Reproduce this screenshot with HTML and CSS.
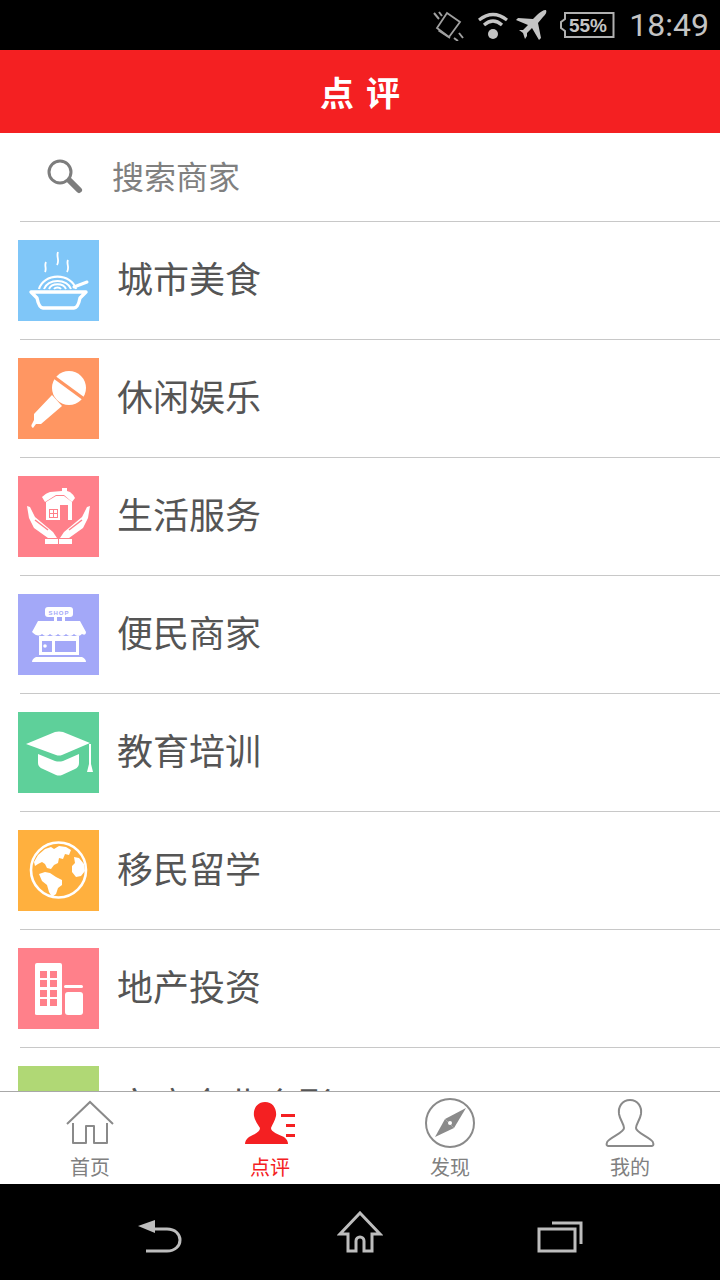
FILE: index.html
```html
<!DOCTYPE html>
<html lang="zh">
<head>
    <meta charset="UTF-8">
    <meta name="viewport" content="width=device-width, initial-scale=1.0">
    <title>点评</title>
    <link rel="stylesheet" href="styles.css">
</head>
<body>
    <div class="screen">
        <div class="status-bar">
            <!-- vibrate -->
            <svg class="st-vibrate" width="32" height="32" viewBox="0 0 32 32" fill="none" stroke="#a0a0a0" stroke-width="1.8">
                <path d="M14 4 L27 13 L16 28 L4 19 Z"/>
                <path d="M5.500 21.500 L17 29" stroke-width="1.500"/>
                <path d="M1 4 L6 10 M6 3 L9 7 M21 29 L25 32 M26 24 L30 29" stroke-width="2"/>
            </svg>
            <!-- wifi -->
            <svg class="st-wifi" width="32" height="30" viewBox="0 0 32 30" fill="none" stroke="#c4c4c4" stroke-width="3.200">
                <path d="M2 10 Q16 -1 30 10"/>
                <path d="M7 15 Q16 7 25 15"/>
                <circle cx="16" cy="24" r="5" fill="#c4c4c4" stroke="none"/>
            </svg>
            <!-- plane -->
            <svg class="st-plane" width="32" height="32" viewBox="0 0 32 32" fill="#c4c4c4">
                <path d="M30 1 C27 1 24 3 21 6 L17 10 L2 9 L0 11 L12 16 L7 21 L3 21 L7 24 L9 30 L11 27 L11 24 L16 19 L23 31 L25 29 L22 14 L27 8 C30 5 31 3 30 1 Z"/>
            </svg>
            <!-- battery -->
            <svg class="st-battery" width="56" height="28" viewBox="0 0 56 28">
                <path d="M6 2 H54.500 V26 H6 V20 L2 17 V11 L6 8 Z" fill="none" stroke="#b0b0b0" stroke-width="2"/>
                <text class="st-battery-text" x="29" y="21" text-anchor="middle">55%</text>
            </svg>
            <span class="st-time">18:49</span>
        </div>

        <div class="title-bar">点评</div>

        <div class="search-row">
            <svg class="search-icon" width="38" height="38" viewBox="0 0 38 38" fill="none">
                <circle cx="14" cy="14" r="11" stroke="#7d7d7d" stroke-width="3"/>
                <path d="M24 23 L33 32" stroke="#7d7d7d" stroke-width="6" stroke-linecap="round"/>
            </svg>
            <span class="search-text">搜索商家</span>
        </div>

        <div class="cat-list">
            <div class="cat-row">
                <div class="cat-icon bg-blue">
                    <svg width="81" height="81" viewBox="0 0 81 81" fill="none" stroke="#fff">
                        <path d="M28 22 C26 26 29 28 27 32 M40 12 C38 17 42 20 39 25 M50 20 C48 24 52 27 49 32" stroke-width="1.800"/>
                        <path d="M21 49 A19 16 0 0 1 58 49" stroke-width="2.200"/>
                        <path d="M26 49 A14 11 0 0 1 53 49" stroke-width="2"/>
                        <path d="M31 49 A9 7 0 0 1 48 49" stroke-width="2"/>
                        <path d="M36 49 A4 3 0 0 1 43 49" stroke-width="2"/>
                        <path d="M56 47 L69 42" stroke-width="3" stroke-linecap="round"/>
                        <path d="M13 52 H68 L62 58 Q60 68 56 68 H25 Q21 68 19 58 Z" stroke-width="3.400" stroke-linejoin="round"/>
                    </svg>
                </div>
                <span class="cat-name">城市美食</span>
            </div>
            <div class="cat-row">
                <div class="cat-icon bg-orange">
                    <svg width="81" height="81" viewBox="0 0 81 81" fill="#fff">
                        <circle cx="51" cy="30" r="17"/>
                        <path d="M36 19 L66 41" stroke="#ff9662" stroke-width="3.400"/>
                        <path d="M34 37 L44 48 L23 66 L18 66 L15 70 A2.500 2.500 0 0 1 14 66 L16 62 L16 56 Z"/>
                    </svg>
                </div>
                <span class="cat-name">休闲娱乐</span>
            </div>
            <div class="cat-row">
                <div class="cat-icon bg-rose">
                    <svg width="81" height="81" viewBox="0 0 81 81" fill="#fff">
                        <path d="M24 21 Q28 17 32 16 L44 15 V12 H49 V15 L52 16 Q56 19 57 22 L54 26 L46 19 H38 L27 26 Z"/>
                        <path d="M28 26 L38 20 H46 L54 26 V44 H28 Z"/>
                        <path d="M42 29 H50 V44 H42 Z" fill="#ff808a"/>
                        <path d="M31 33 H40 V42 H31 Z" fill="#ff808a"/>
                        <path d="M32 34 H35 V37 H32 Z M36 34 H39 V37 H36 Z M32 38 H35 V41 H32 Z M36 38 H39 V41 H36 Z"/>
                        <path d="M9 30 L12 31 L17 41 L35 56 L39 62 H30 L16 52 L11 42 Z"/>
                        <path d="M72 30 L69 31 L64 41 L46 56 L42 62 H51 L65 52 L70 42 Z"/>
                        <path d="M17 44 L30 54" stroke="#ff808a" stroke-width="1.500"/>
                        <path d="M64 44 L51 54" stroke="#ff808a" stroke-width="1.500"/>
                        <path d="M27 63 H40 V68 H27 Z M41 63 H54 V68 H41 Z"/>
                    </svg>
                </div>
                <span class="cat-name">生活服务</span>
            </div>
            <div class="cat-row">
                <div class="cat-icon bg-violet">
                    <svg width="81" height="81" viewBox="0 0 81 81" fill="#fff">
                        <rect x="27" y="13" width="28" height="10" rx="3"/>
                        <text class="shop-word" x="41" y="20.500" text-anchor="middle">SHOP</text>
                        <path d="M36 23 H39 V27 H36 Z M44 23 H47 V27 H44 Z"/>
                        <path d="M20 27 H62 L68 38 Q68 42 64 40 Q60 44 56 40 Q52 44 48 40 Q44 44 40 40 Q36 44 32 40 Q28 44 24 40 Q20 44 14 38 Z"/>
                        <path d="M21 42 H61 V61 H21 Z M24 47 V58 H34 V47 Z M37 47 V58 H58 V47 Z" fill-rule="evenodd"/>
                        <circle cx="27" cy="52" r="1.800"/>
                        <path d="M18 63 H64 Q68 65 68 68 H14 Q14 65 18 63 Z"/>
                    </svg>
                </div>
                <span class="cat-name">便民商家</span>
            </div>
            <div class="cat-row">
                <div class="cat-icon bg-green">
                    <svg width="81" height="81" viewBox="0 0 81 81" fill="#fff">
                        <path d="M8 32 L37 20 Q41 19 45 20 L72 31 L44 43 Q41 44 38 43 Z"/>
                        <path d="M20 42 L37 49 Q41 50 45 49 L61 42 V51 Q61 55 57 57 L44 63 Q41 64 38 63 L25 57 Q20 55 20 51 Z"/>
                        <path d="M71 32 H73 V52 L75 60 H69 L71 52 Z"/>
                    </svg>
                </div>
                <span class="cat-name">教育培训</span>
            </div>
            <div class="cat-row">
                <div class="cat-icon bg-amber">
                    <svg width="81" height="81" viewBox="0 0 81 81">
                        <circle cx="40.500" cy="40" r="27.500" fill="none" stroke="#fff" stroke-width="2.600"/>
                        <path fill="#fff" d="M16 32 L20 25 L27 19 L33 17 L36 19 L41 16 L48 17 L53 20 L51 25 L47 24 L45 29 L41 28 L40 33 L36 35 L33 39 L29 38 L27 34 L24 32 L20 34 L17 36 Z"/>
                        <path fill="#fff" d="M21 44 L27 42 L32 43 L38 47 L44 50 L44 55 L40 58 L38 64 L34 67 L31 62 L29 55 L24 51 Z"/>
                        <path fill="#fff" d="M56 27 L61 28 L66 34 L67 41 L63 46 L58 47 L54 42 L54 36 L57 33 Z"/>
                    </svg>
                </div>
                <span class="cat-name">移民留学</span>
            </div>
            <div class="cat-row">
                <div class="cat-icon bg-pink">
                    <svg width="81" height="81" viewBox="0 0 81 81" fill="#fff">
                        <path fill-rule="evenodd" d="M19 15 H42 Q44 15 44 17 V66 Q44 67 42 67 H19 Q17 67 17 66 V17 Q17 15 19 15 Z M22 23 V30 H29 V23 Z M32 23 V30 H39 V23 Z M22 32 V39 H29 V32 Z M32 32 V39 H39 V32 Z M22 42 V49 H29 V42 Z M32 42 V49 H39 V42 Z M22 51 V58 H29 V51 Z M32 51 V58 H39 V51 Z"/>
                        <rect x="46" y="37" width="19" height="3" rx="1.500"/>
                        <rect x="47" y="44" width="18" height="23" rx="3"/>
                    </svg>
                </div>
                <span class="cat-name">地产投资</span>
            </div>
            <div class="cat-row">
                <div class="cat-icon bg-lime">
                    <svg width="81" height="81" viewBox="0 0 81 81" fill="#fff">
                        <circle cx="40" cy="33" r="8"/>
                        <circle cx="26" cy="32" r="5"/>
                        <circle cx="54" cy="32" r="5"/>
                    </svg>
                </div>
                <span class="cat-name">家庭企业合影</span>
            </div>
        </div>

        <div class="tab-bar">
            <div class="tab">
                <svg width="50" height="50" viewBox="0 -3 50 50" fill="none" stroke="#8a8a8a" stroke-width="2">
                    <path d="M2 23 L25 1 L48 23"/>
                    <path d="M8 22 V42 H21 V25 H29 V42 H42 V22" stroke-linejoin="round"/>
                </svg>
                <span>首页</span>
            </div>
            <div class="tab tab-active">
                <svg width="50" height="50" viewBox="0 -3 50 50" fill="#f42022">
                    <path d="M20 1 C28 1 32 8 31 15 C30 20 27 24 26 27 C26 31 33 33 39 36 C42 38 43 41 43 43 H0 C0 41 1 38 4 36 C10 33 15 31 15 27 C13 24 10 20 9 15 C8 8 12 1 20 1 Z"/>
                    <path d="M36 13 H50 V16 H36 Z M41 23 H50 V26 H41 Z M41 33 H50 V36 H41 Z"/>
                </svg>
                <span>点评</span>
            </div>
            <div class="tab">
                <svg width="50" height="50" viewBox="0 0 50 50" fill="none">
                    <circle cx="25" cy="25" r="24" stroke="#8a8a8a" stroke-width="2"/>
                    <path d="M41 10 L29 30 L20 21 Z" fill="#8a8a8a"/>
                    <path d="M10 39 L20 21 L29 30 Z" fill="#8a8a8a"/>
                    <circle cx="25" cy="25" r="2" fill="#fff"/>
                </svg>
                <span>发现</span>
            </div>
            <div class="tab">
                <svg width="50" height="50" viewBox="0 0 50 50" fill="none" stroke="#8a8a8a" stroke-width="2">
                    <path d="M25 2 C33 2 37 9 36 16 C35 22 31 26 31 30 C31 34 40 37 46 42 C49 44 49 48 47 48 H3 C1 48 1 44 4 42 C10 37 19 34 19 30 C19 26 15 22 14 16 C13 9 17 2 25 2 Z"/>
                </svg>
                <span>我的</span>
            </div>
        </div>

        <div class="nav-bar">
            <svg width="46" height="34" viewBox="0 0 46 34" fill="none" stroke="#bdbdbd" stroke-width="3">
                <path d="M18 10 H30 C38 10 43 15 43 21 C43 27 38 32 30 32 H9"/>
                <path d="M1 7 L18 1 V14 Z" fill="#bdbdbd" stroke="none"/>
            </svg>
            <svg width="46" height="42" viewBox="0 0 46 42" fill="none" stroke="#bdbdbd" stroke-width="3">
                <path d="M23 2 L43 23 H35 V40 H27 V30 A4 4 0 0 0 19 30 V40 H11 V23 H3 Z"/>
            </svg>
            <svg width="46" height="32" viewBox="0 0 46 32" fill="none" stroke="#bdbdbd" stroke-width="3">
                <path d="M15 2 H44 V23"/>
                <rect x="2" y="8" width="36" height="22"/>
            </svg>
        </div>
    </div>
</body>
</html>
```
FILE: styles.css
```css
html, body {
    margin: 0;
    padding: 0;
}

body {
    font-family: "Noto Sans CJK SC", "Liberation Sans", sans-serif;
    background-color: #000;
}

.screen {
    width: 720px;
    height: 1280px;
    display: flex;
    flex-direction: column;
    overflow: hidden;
    background-color: #fff;
}

.status-bar {
    height: 50px;
    flex: none;
    background-color: #000;
    display: flex;
    align-items: center;
    justify-content: flex-end;
    padding-right: 11px;
    box-sizing: border-box;
}

.st-vibrate {
    margin-right: 12px;
}

.st-wifi {
    margin-right: 7px;
}

.st-plane {
    margin-right: 11px;
}

.st-battery {
    margin-right: 14px;
}

.st-battery-text {
    font-family: "Liberation Sans", sans-serif;
    font-size: 19px;
    font-weight: 700;
    fill: #c4c4c4;
}

.st-time {
    font-family: Roboto, sans-serif;
    font-size: 32px;
    line-height: 50px;
    color: #c4c4c4;
}

.title-bar {
    height: 83px;
    flex: none;
    background-color: #f42022;
    color: #fff;
    font-size: 34px;
    font-weight: 700;
    letter-spacing: 12px;
    padding-left: 12px;
    box-sizing: border-box;
    display: flex;
    align-items: center;
    justify-content: center;
}

.search-row {
    height: 88px;
    flex: none;
    display: flex;
    align-items: center;
    padding-left: 46px;
    box-sizing: border-box;
}

.search-text {
    font-size: 32px;
    line-height: 1;
    color: #808080;
    margin: 0 0 4px 28px;
}

.cat-list {
    flex: 1;
    min-height: 0;
    overflow: hidden;
}

.cat-row {
    height: 118px;
    box-sizing: border-box;
    display: flex;
    align-items: center;
    padding: 1px 0 0 18px;
    position: relative;
}

.cat-row::before {
    content: "";
    position: absolute;
    top: 0;
    left: 20px;
    right: 0;
    height: 1px;
    background-color: #c8c8c8;
}

.cat-icon {
    width: 81px;
    height: 81px;
    flex: none;
}

.cat-icon svg {
    display: block;
}

.shop-word {
    font-family: "Liberation Sans", sans-serif;
    font-size: 6px;
    font-weight: 700;
    letter-spacing: 1px;
    fill: #a3a8f8;
}

.bg-blue { background-color: #7fc6f8; }
.bg-orange { background-color: #ff9662; }
.bg-rose { background-color: #ff808a; }
.bg-violet { background-color: #a3a8f8; }
.bg-green { background-color: #5ed09a; }
.bg-amber { background-color: #ffb03e; }
.bg-pink { background-color: #ff808a; }
.bg-lime { background-color: #b0d875; }

.cat-name {
    font-size: 36px;
    line-height: 1;
    color: #555;
    margin: 0 0 8px 18px;
    white-space: nowrap;
}

.tab-bar {
    height: 93px;
    flex: none;
    border-top: 1px solid #a8a8a8;
    box-sizing: border-box;
    background-color: #fff;
    display: grid;
    grid-template-columns: repeat(4, 1fr);
}

.tab {
    display: flex;
    flex-direction: column;
    align-items: center;
    color: #808080;
    font-size: 20px;
    line-height: 24px;
    padding-top: 6px;
}

.tab svg {
    margin-bottom: 7px;
}

.tab-active {
    color: #f42022;
}

.nav-bar {
    height: 96px;
    flex: none;
    background-color: #000;
    display: grid;
    grid-template-columns: repeat(3, 200px);
    justify-content: center;
    justify-items: center;
    align-items: end;
    padding-bottom: 27px;
    box-sizing: border-box;
}
```
